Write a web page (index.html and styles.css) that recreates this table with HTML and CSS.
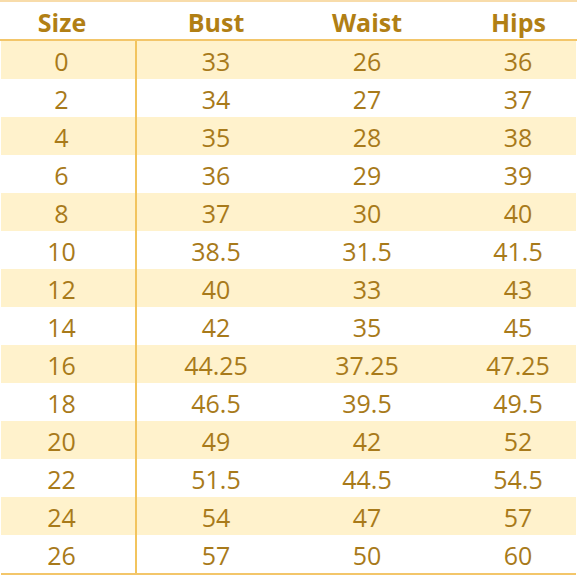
FILE: index.html
```html
<!DOCTYPE html>
<html>
<head>
<meta charset="utf-8">
<link rel="stylesheet" href="styles.css">
</head>
<body>
<div class="chart">
  <div class="row head">
    <div class="c c1">Size</div><div class="c">Bust</div><div class="c">Waist</div><div class="c c4">Hips</div>
  </div>
  <div class="body">
    <div class="row band"><div class="c c1">0</div><div class="c">33</div><div class="c">26</div><div class="c c4">36</div></div>
    <div class="row"><div class="c c1">2</div><div class="c">34</div><div class="c">27</div><div class="c c4">37</div></div>
    <div class="row band"><div class="c c1">4</div><div class="c">35</div><div class="c">28</div><div class="c c4">38</div></div>
    <div class="row"><div class="c c1">6</div><div class="c">36</div><div class="c">29</div><div class="c c4">39</div></div>
    <div class="row band"><div class="c c1">8</div><div class="c">37</div><div class="c">30</div><div class="c c4">40</div></div>
    <div class="row"><div class="c c1">10</div><div class="c">38.5</div><div class="c">31.5</div><div class="c c4">41.5</div></div>
    <div class="row band"><div class="c c1">12</div><div class="c">40</div><div class="c">33</div><div class="c c4">43</div></div>
    <div class="row"><div class="c c1">14</div><div class="c">42</div><div class="c">35</div><div class="c c4">45</div></div>
    <div class="row band"><div class="c c1">16</div><div class="c">44.25</div><div class="c">37.25</div><div class="c c4">47.25</div></div>
    <div class="row"><div class="c c1">18</div><div class="c">46.5</div><div class="c">39.5</div><div class="c c4">49.5</div></div>
    <div class="row band"><div class="c c1">20</div><div class="c">49</div><div class="c">42</div><div class="c c4">52</div></div>
    <div class="row"><div class="c c1">22</div><div class="c">51.5</div><div class="c">44.5</div><div class="c c4">54.5</div></div>
    <div class="row band"><div class="c c1">24</div><div class="c">54</div><div class="c">47</div><div class="c c4">57</div></div>
    <div class="row"><div class="c c1">26</div><div class="c">57</div><div class="c">50</div><div class="c c4">60</div></div>
  </div>
</div>
</body>
</html>
```
FILE: styles.css
```css
html, body {
  margin: 0;
  padding: 0;
  background: #ffffff;
}
.chart {
  width: 577px;
  font-family: "Open Sans", "Liberation Sans", sans-serif;
  font-size: 25px;
  color: #a87a1a;
  border-top: 2px solid #f8dcaa;
}
.row {
  display: grid;
  grid-template-columns: 137px 154px 152px 134px;
  height: 38px;
}
.head {
  height: 37px;
  font-weight: 700;
  color: #b17f14;
  border-bottom: 2px solid #f3c66a;
}
.body {
  border-bottom: 2px solid #f3c66a;
  width: 575px;
  margin-left: 1px;
}
.body .row {
  grid-template-columns: 136px 154px 152px 133px;
}
.band {
  background: #fff2cc;
}
.c {
  display: flex;
  align-items: center;
  justify-content: center;
  line-height: 1;
  padding-top: 2px;
}
.head .c {
  padding-top: 3px;
}
.c1 {
  padding-right: 13px;
}
.body .c1 {
  border-right: 2px solid #f2c45e;
}
.c1 + .c {
  padding-left: 4px;
}
.c4 {
  padding-left: 17px;
}
```
